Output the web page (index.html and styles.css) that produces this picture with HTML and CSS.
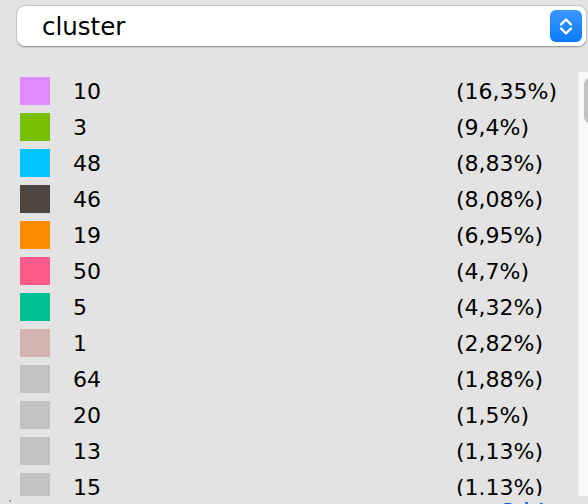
FILE: index.html
```html
<!DOCTYPE html>
<html>
<head>
<meta charset="utf-8">
<link rel="stylesheet" href="styles.css">
</head>
<body>
<div class="panel">
  <div class="select-wrap">
    <div class="select">
      <span class="select-text">cluster</span>
      <span class="select-btn">
        <svg width="32" height="32" viewBox="0 0 32 32">
          <path d="M11 18.5 L16 13.5 L21 18.5" fill="none" stroke="#fff" stroke-width="2.4" stroke-linecap="round" stroke-linejoin="round" transform="translate(0,-4)"/>
          <path d="M11 20.5 L16 25.5 L21 20.5" fill="none" stroke="#fff" stroke-width="2.4" stroke-linecap="round" stroke-linejoin="round" transform="translate(0,-2)"/>
        </svg>
      </span>
    </div>
  </div>
  <div class="list-box">
    <div class="rows">
      <div class="row"><span class="sw c1"></span><span class="lbl">10</span><span class="pct">(16,35%)</span></div>
      <div class="row"><span class="sw c2"></span><span class="lbl">3</span><span class="pct">(9,4%)</span></div>
      <div class="row"><span class="sw c3"></span><span class="lbl">48</span><span class="pct">(8,83%)</span></div>
      <div class="row"><span class="sw c4"></span><span class="lbl">46</span><span class="pct">(8,08%)</span></div>
      <div class="row"><span class="sw c5"></span><span class="lbl">19</span><span class="pct">(6,95%)</span></div>
      <div class="row"><span class="sw c6"></span><span class="lbl">50</span><span class="pct">(4,7%)</span></div>
      <div class="row"><span class="sw c7"></span><span class="lbl">5</span><span class="pct">(4,32%)</span></div>
      <div class="row"><span class="sw c8"></span><span class="lbl">1</span><span class="pct">(2,82%)</span></div>
      <div class="row"><span class="sw c9"></span><span class="lbl">64</span><span class="pct">(1,88%)</span></div>
      <div class="row"><span class="sw c9"></span><span class="lbl">20</span><span class="pct">(1,5%)</span></div>
      <div class="row"><span class="sw c9"></span><span class="lbl">13</span><span class="pct">(1,13%)</span></div>
      <div class="row"><span class="sw c9"></span><span class="lbl">15</span><span class="pct">(1.13%)</span></div>
    </div>
    <div class="track"><div class="thumb"></div></div>
  </div>
  <div class="footer">
    <span class="dot"></span>
    <span class="link">Delete</span>
  </div>
</div>
</body>
</html>
```

FILE: styles.css
```css
html, body {
  margin: 0;
  padding: 0;
  background: #e3e3e3;
  width: 588px;
  height: 504px;
  overflow: hidden;
}
.panel {
  font-family: "DejaVu Sans", "Liberation Sans", sans-serif;
  color: #000;
  display: flex;
  flex-direction: column;
}
.select-wrap {
  padding: 6px 2px 0 17px;
  height: 72px;
  box-sizing: border-box;
}
.select {
  height: 40px;
  background: #fff;
  border-radius: 8px;
  box-shadow: 0 0.5px 2px rgba(0,0,0,0.35), 0 0 0 0.5px rgba(0,0,0,0.08);
  display: flex;
  align-items: center;
  justify-content: space-between;
  padding: 0 4px 0 25px;
}
.select-text {
  font-size: 24.5px;
  line-height: 40px;
  padding-top: 1px;
}
.select-btn {
  width: 32px;
  height: 32px;
  border-radius: 6px;
  background: linear-gradient(#3a96ff, #0a7bff);
  display: flex;
}
.list-box {
  height: 424px;
  display: flex;
  overflow: hidden;
}
.rows {
  flex: 1;
  padding-top: 4px;
  display: flex;
  flex-direction: column;
  gap: 8px;
}
.row {
  display: grid;
  grid-template-columns: 30px 1fr 122px;
  column-gap: 23px;
  align-items: center;
  padding-left: 20px;
  height: 28px;
  flex-shrink: 0;
  font-size: 22px;
  line-height: 28px;
}
.lbl, .pct {
  padding-top: 2px;
}
.sw {
  width: 30px;
  height: 28px;
  display: block;
}
.c1 { background: #df8aff; }
.c2 { background: #76c000; }
.c3 { background: #00c4ff; }
.c4 { background: #4c4540; }
.c5 { background: #ff8b00; }
.c6 { background: #ff5b8a; }
.c7 { background: #00c195; }
.c8 { background: #d4b4b0; }
.c9 { background: #c2c2c2; }
.track {
  width: 10px;
  background: #fafafa;
  border-left: 1px solid #ececec;
  box-sizing: border-box;
  padding: 6px 0 0 5px;
}
.thumb {
  width: 12px;
  height: 45px;
  background: #c2c2c2;
  border-radius: 6px;
}
.footer {
  height: 8px;
  display: flex;
  align-items: flex-start;
}
.dot {
  width: 2px;
  height: 2px;
  background: #9a9a9a;
  margin: 4px 0 0 9px;
}
.link {
  margin-left: 492px;
  margin-top: 5px;
  font-size: 14px;
  line-height: 14px;
  color: #0b5bd8;
  font-weight: bold;
}
```
